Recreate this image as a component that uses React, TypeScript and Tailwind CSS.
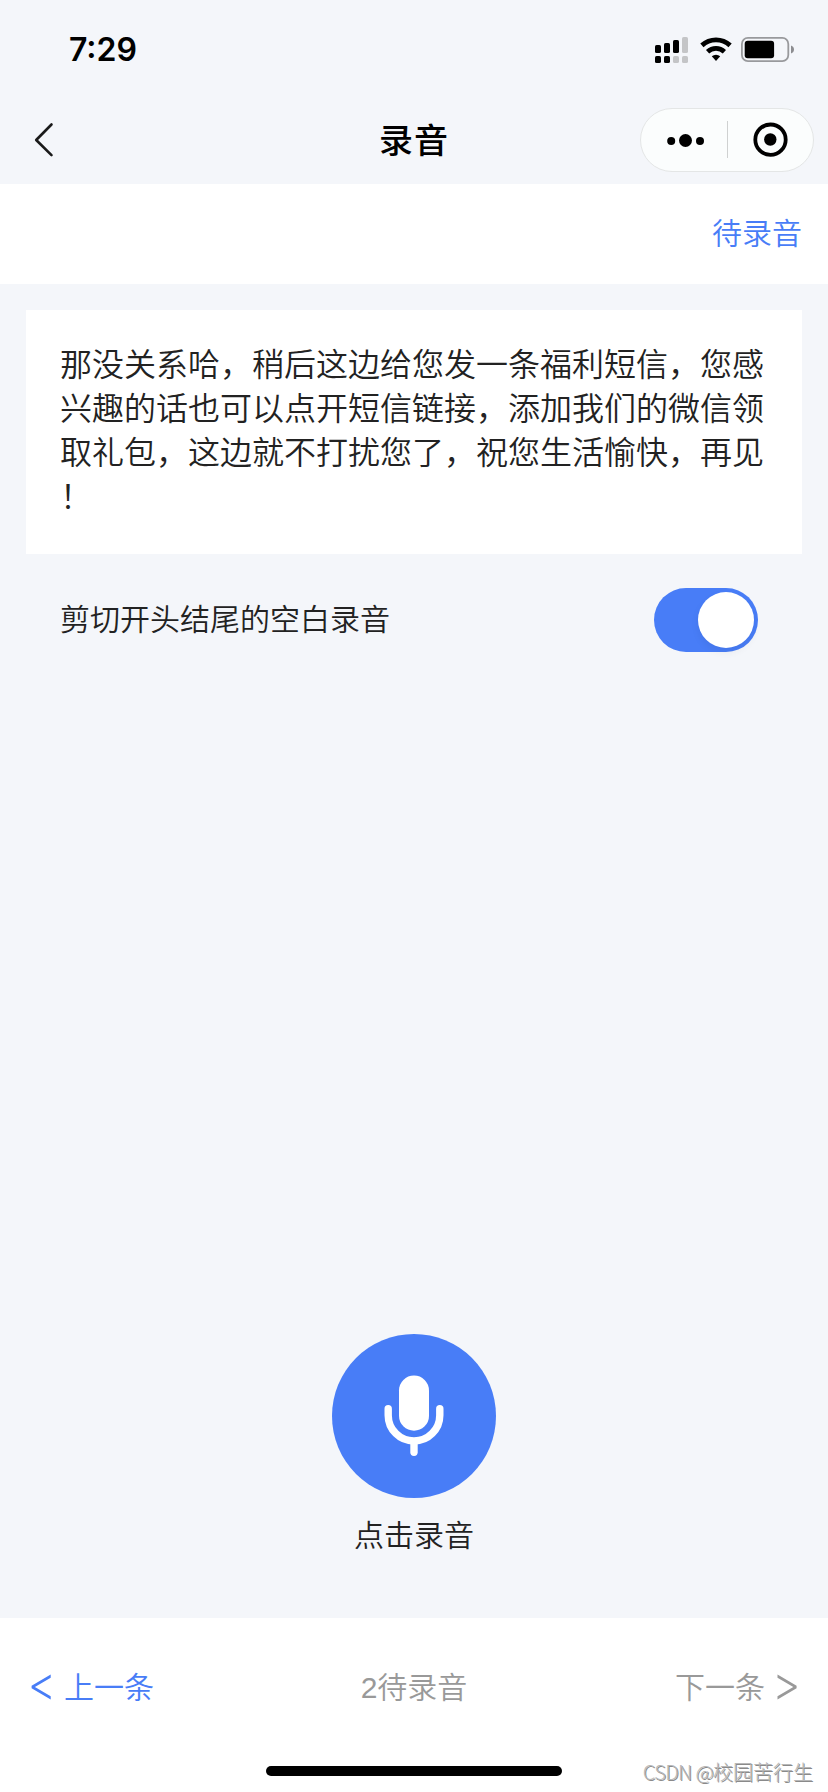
import React from "react";

function SignalIcon() {
  return (
    <svg width="33" height="26" viewBox="0 0 33 26" fill="#000">
      <rect x="0" y="8" width="6" height="8" rx="1.6" />
      <rect x="9" y="6" width="6" height="10" rx="1.6" />
      <rect x="18" y="3" width="6" height="13" rx="1.6" />
      <rect x="27" y="0" width="6" height="16" rx="1.6" fill="#c4c5c7" />
      <rect x="0" y="19" width="6" height="7" rx="1.6" />
      <rect x="9" y="19" width="6" height="7" rx="1.6" />
      <rect x="18" y="19" width="6" height="7" rx="1.6" fill="#c4c5c7" />
      <rect x="27" y="19" width="6" height="7" rx="1.6" fill="#c4c5c7" />
    </svg>
  );
}

function WifiIcon() {
  return (
    <svg width="32" height="26" viewBox="0 0 32 26" fill="none" stroke="#000" strokeWidth="4.8">
      <path d="M1.9 8.4A21 21 0 0 1 30.1 8.4" />
      <path d="M7.6 14.7A12.5 12.5 0 0 1 24.4 14.7" />
      <path d="M16 24L11.8 19.3A6.3 6.3 0 0 1 20.2 19.3Z" fill="#000" stroke="none" />
    </svg>
  );
}

function BatteryIcon() {
  return (
    <svg width="54" height="26" viewBox="0 0 54 26" fill="none">
      <rect x="0.9" y="0.9" width="46.4" height="23.2" rx="6" stroke="#98999c" strokeWidth="1.8" />
      <rect x="3.7" y="3.8" width="29.4" height="17.4" rx="3" fill="#000" />
      <path d="M50 8.5C52 9.2 53 10.6 53 12.5S52 15.8 50 16.5Z" fill="#8c8d90" />
    </svg>
  );
}

function StatusBar() {
  return (
    <div className="flex h-24 items-start justify-between pl-[69px] pr-[33px]">
      <span className="mt-[30px] font-['Inter'] text-[32px] font-semibold leading-10 text-black">7:29</span>
      <div className="mt-[37px] flex">
        <SignalIcon />
        <div className="ml-3 mr-[9px]">
          <WifiIcon />
        </div>
        <BatteryIcon />
      </div>
    </div>
  );
}

function NavBar() {
  return (
    <div className="grid h-[88px] grid-cols-[1fr_auto_1fr] items-center">
      <svg className="ml-[33px]" width="22" height="36" viewBox="0 0 22 36" fill="none" stroke="#1a1a1a" strokeWidth="2.6" strokeLinecap="round" strokeLinejoin="round">
        <path d="M18.5 2.5L3.2 18L18.5 33.2" />
      </svg>
      <h1 className="pt-px text-[34px] font-medium leading-none tracking-[1px] text-black">录音</h1>
      <div className="mr-[14px] flex h-16 w-[174px] items-center justify-self-end rounded-full border border-[#e4e6e6] bg-[#fbfdfd]">
        <svg width="172" height="62" viewBox="0 0 172 62">
          <circle cx="30.2" cy="32" r="4" />
          <circle cx="44.5" cy="31.5" r="6.5" />
          <circle cx="59" cy="32" r="4" />
          <path d="M86.5 12V49" stroke="#cfd1d1" strokeWidth="1" />
          <circle cx="129.5" cy="30.7" r="15.2" fill="none" stroke="#000" strokeWidth="3.8" />
          <circle cx="129.3" cy="30.5" r="6.2" />
        </svg>
      </div>
    </div>
  );
}

function MicButton() {
  return (
    <button className="size-[164px] rounded-full bg-[#487df7]">
      <svg width="164" height="164" viewBox="0 0 164 164" fill="none" stroke="#fff" strokeWidth="7.4" strokeLinecap="round">
        <rect x="67" y="41.5" width="30" height="55.2" rx="15" fill="#fff" stroke="none" />
        <path d="M56.2 74.8V81.2a25.8 25.8 0 0 0 51.6 0V74.8" />
        <path d="M82 110V118.300" />
      </svg>
    </button>
  );
}

export default function App() {
  return (
    <div className="flex h-[1792px] w-[828px] flex-col overflow-hidden bg-[#f4f6fa] font-['Liberation_Sans','Noto_Sans_CJK_SC',sans-serif] font-[350] text-[#222]">
      <header>
        <StatusBar />
        <NavBar />
      </header>
      <div className="flex h-[100px] items-center justify-end bg-white pr-[26px] text-[30px] leading-none text-[#487df7]">
        待录音
      </div>
      <main className="flex flex-1 flex-col">
        <section className="mx-[26px] mt-[26px] h-[244px] bg-white px-[34px] pt-[33px] text-[32px] leading-[44px]">
          <p>
            那没关系哈，稍后这边给您发一条福利短信，您感
            <br />
            兴趣的话也可以点开短信链接，添加我们的微信领
            <br />
            取礼包，这边就不打扰您了，祝您生活愉快，再见
            <br />！
          </p>
        </section>
        <div className="mt-[34px] flex h-16 items-center justify-between pl-[60px] pr-[70px]">
          <span className="text-[30px] leading-none">剪切开头结尾的空白录音</span>
          <div className="flex h-16 w-[104px] justify-end rounded-full bg-[#487df7] p-1">
            <div className="size-14 rounded-full bg-white shadow-[0_4px_8px_rgba(0,0,0,0.06)]" />
          </div>
        </div>
        <div className="mt-auto flex flex-col items-center pb-[66px]">
          <MicButton />
          <span className="mt-[22px] text-[30px] leading-8">点击录音</span>
        </div>
      </main>
      <footer className="h-[174px] bg-white">
        <div className="grid h-[138px] grid-cols-3 items-center px-[31px] text-[30px] leading-none text-[#999]">
          <div className="flex items-center gap-[13px] text-[#487df7]">
            <svg width="20" height="26" viewBox="0 0 20 26" fill="currentColor">
              <path d="M19.7 0.5V3.7L3.9 13L19.7 22.3V25.5L0.6 14.3V11.7Z" />
            </svg>
            <span className="pt-0.5">上一条</span>
          </div>
          <span className="pt-0.5 text-center">2待录音</span>
          <div className="flex items-center justify-end gap-3">
            <span className="pt-0.5">下一条</span>
            <svg width="20" height="26" viewBox="0 0 20 26" fill="currentColor">
              <path d="M0.5 0.5V3.7L16.3 13L0.5 22.3V25.5L19.6 14.3V11.7Z" />
            </svg>
          </div>
        </div>
        <div className="grid h-9 grid-cols-[1fr_296px_1fr] items-start">
          <div className="col-start-2 mt-[10px] h-[10px] rounded-full bg-black" />
          <div className="mr-[15px] mt-1 whitespace-nowrap text-right font-['Noto_Sans_CJK_SC',sans-serif] text-[20px] font-light leading-6 text-[#b8b8b8] [text-shadow:1px_1px_0_#8a8a8a]">
            <span className="tracking-[-0.6px]">CSDN @</span>校园苦行生
          </div>
        </div>
      </footer>
    </div>
  );
}
